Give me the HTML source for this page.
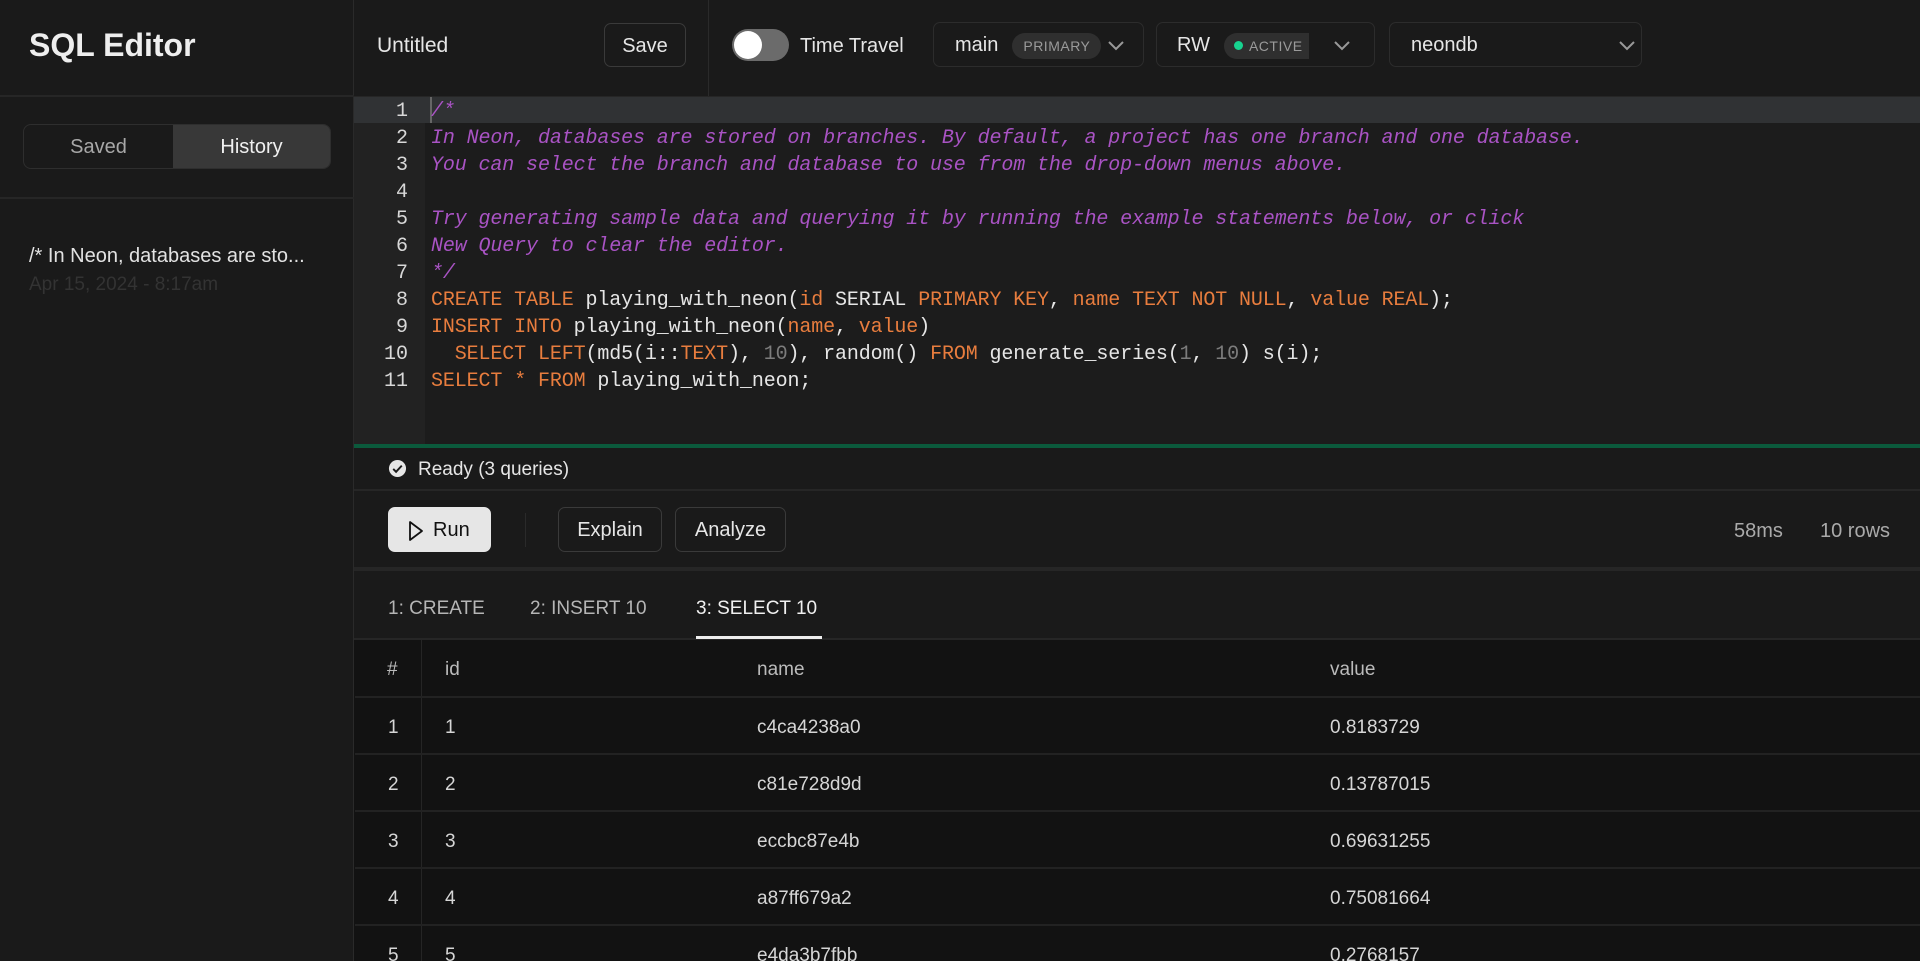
<!DOCTYPE html>
<html><head><meta charset="utf-8"><style>
*{box-sizing:border-box;margin:0;padding:0}
html,body{width:1920px;height:961px;overflow:hidden}
body{background:#1a1a1a;font-family:"Liberation Sans",sans-serif;color:#e6e6e6;position:relative}
.a{position:absolute}
.side{left:0;top:0;width:354px;height:961px;border-right:1px solid #2a2a2a;background:#1a1a1a}
.btn{position:absolute;border:1px solid #3a3a3a;border-radius:7px;display:flex;align-items:center;font-size:20px;color:#e6e6e6;padding-top:2px}
.code{font-family:"Liberation Mono",monospace;font-size:20px;letter-spacing:-0.12px;white-space:pre;line-height:27px}
.c{color:#a953c4;font-style:italic}.k{color:#e87d3e}.n{color:#7c7c7c}
.ln{position:absolute;left:354px;width:54px;text-align:right;font-family:"Liberation Mono",monospace;font-size:20px;color:#d8d8d8}
.row{position:absolute;left:355px;width:1565px;height:57px;border-bottom:2px solid #222;font-size:19px;color:#d6d6d6}
.row span{position:absolute;top:calc(50% + 2px);transform:translateY(-50%)}
</style></head><body>
<div class="a side">
  <div class="a" style="left:29px;top:27px;font-size:32px;font-weight:bold;color:#eee">SQL Editor</div>
  <div class="a" style="left:0;top:95px;width:354px;border-top:2px solid #262626"></div>
  <div class="a" style="left:23px;top:124px;width:308px;height:45px;border:1px solid #2e2e2e;border-radius:8px;overflow:hidden;display:flex;font-size:20px;padding-top:2px">
    <div style="width:149px;display:flex;align-items:center;justify-content:center;color:#a8a8a8">Saved</div>
    <div style="flex:1;display:flex;align-items:center;justify-content:center;background:#383838;color:#f0f0f0;margin-top:-2px;padding-top:2px">History</div>
  </div>
  <div class="a" style="left:0;top:197px;width:354px;border-top:2px solid #262626"></div>
  <div class="a" style="left:29px;top:245px;font-size:20px;color:#e2e2e2">/* In Neon, databases are sto...</div>
  <div class="a" style="left:29px;top:274px;font-size:19px;color:#333">Apr 15, 2024 - 8:17am</div>
</div>
<div class="a" style="left:354px;top:0;width:1566px;height:97px;border-bottom:1px solid #262626"></div>
<div class="a" style="left:708px;top:0;height:96px;border-left:1px solid #2a2a2a"></div>
<div class="a" style="left:377px;top:34px;font-size:21px;color:#e6e6e6">Untitled</div>
<div class="btn" style="left:604px;top:23px;width:82px;height:44px;justify-content:center">Save</div>
<div class="a" style="left:732px;top:29px;width:57px;height:32px;border-radius:16px;background:#6b6b6b"></div>
<div class="a" style="left:734px;top:31px;width:28px;height:28px;border-radius:14px;background:#fff"></div>
<div class="a" style="left:800px;top:35px;font-size:20px">Time Travel</div>
<div class="btn" style="left:933px;top:22px;width:211px;height:45px;border-color:#2c2c2c">
  <span style="margin-left:21px">main</span>
  <span style="margin-left:14px;background:#2f2f2f;border-radius:13px;font-size:14px;letter-spacing:.5px;color:#9a9a9a;padding:5px 11px">PRIMARY</span>
  <svg style="margin-left:6px" width="18" height="12" viewBox="0 0 18 12"><path d="M2 2l7 7 7-7" stroke="#999" stroke-width="2" fill="none"/></svg>
</div>
<div class="btn" style="left:1156px;top:22px;width:219px;height:45px;border-color:#2c2c2c">
  <span style="margin-left:20px">RW</span>
  <span style="margin-left:14px;background:#2f2f2f;border-radius:13px 0 0 13px;font-size:14px;letter-spacing:.5px;color:#9a9a9a;padding:5px 6px 5px 10px;display:flex;align-items:center"><i style="width:9px;height:9px;border-radius:5px;background:#17d38f;margin-right:6px;display:inline-block"></i>ACTIVE</span>
  <svg style="margin-left:24px" width="18" height="12" viewBox="0 0 18 12"><path d="M2 2l7 7 7-7" stroke="#999" stroke-width="2" fill="none"/></svg>
</div>
<div class="btn" style="left:1389px;top:22px;width:253px;height:45px;border-color:#2c2c2c">
  <span style="margin-left:21px">neondb</span>
  <svg style="margin-left:140px" width="18" height="12" viewBox="0 0 18 12"><path d="M2 2l7 7 7-7" stroke="#999" stroke-width="2" fill="none"/></svg>
</div>
<div class="a" style="left:354px;top:97px;width:1566px;height:349px;background:#1c1c1c"></div>
<div class="a" style="left:354px;top:97px;width:71px;height:349px;background:#222"></div>
<div class="a" style="left:354px;top:97px;width:1566px;height:26px;background:#303234"></div>
<div class="a" style="left:430px;top:97px;height:26px;border-left:2px solid #666"></div>
<div class="ln" style="top:98px;line-height:27px">1<br>2<br>3<br>4<br>5<br>6<br>7<br>8<br>9<br>10<br>11</div>
<div class="a code" style="left:431px;top:98px"><span class="c">/*
In Neon, databases are stored on branches. By default, a project has one branch and one database.
You can select the branch and database to use from the drop-down menus above.

Try generating sample data and querying it by running the example statements below, or click
New Query to clear the editor.
*/</span>
<span class="k">CREATE TABLE</span> playing_with_neon(<span class="k">id</span> SERIAL <span class="k">PRIMARY KEY</span>, <span class="k">name</span> <span class="k">TEXT NOT NULL</span>, <span class="k">value</span> <span class="k">REAL</span>);
<span class="k">INSERT INTO</span> playing_with_neon(<span class="k">name</span>, <span class="k">value</span>)
  <span class="k">SELECT LEFT</span>(md5(i::<span class="k">TEXT</span>), <span class="n">10</span>), random() <span class="k">FROM</span> generate_series(<span class="n">1</span>, <span class="n">10</span>) s(i);
<span class="k">SELECT</span> <span class="k">*</span> <span class="k">FROM</span> playing_with_neon;</div>
<div class="a" style="left:354px;top:444px;width:1566px;height:4px;background:#0b5a3c"></div>
<svg class="a" style="left:388px;top:459px" width="19" height="19" viewBox="0 0 20 20"><circle cx="10" cy="10" r="9" fill="#e6e6e6"/><path d="M5.5 10.5l3 3 6-6.5" stroke="#1a1a1a" stroke-width="2" fill="none"/></svg>
<div class="a" style="left:418px;top:459px;font-size:19px">Ready (3 queries)</div>
<div class="a" style="left:354px;top:489px;width:1566px;border-top:2px solid #262626"></div>
<div class="btn" style="left:388px;top:507px;width:103px;height:45px;background:#e6e6e6;color:#111;border-color:#e6e6e6">
  <svg style="margin-left:19px;margin-right:9px" width="16" height="22" viewBox="0 0 16 22"><path d="M2 2l12 9-12 9z" stroke="#111" stroke-width="1.8" fill="none" stroke-linejoin="round"/></svg>Run</div>
<div class="a" style="left:525px;top:513px;height:34px;border-left:1px solid #2a2a2a"></div>
<div class="btn" style="left:558px;top:507px;width:104px;height:45px;justify-content:center">Explain</div>
<div class="btn" style="left:675px;top:507px;width:111px;height:45px;justify-content:center">Analyze</div>
<div class="a" style="left:1734px;top:520px;font-size:20px;color:#aaa">58ms</div>
<div class="a" style="left:1820px;top:520px;font-size:20px;color:#aaa">10 rows</div>
<div class="a" style="left:354px;top:567px;width:1566px;border-top:4px solid #262626"></div>
<div class="a" style="left:388px;top:598px;font-size:19px;color:#b5b5b5">1: CREATE</div>
<div class="a" style="left:530px;top:598px;font-size:19px;color:#b5b5b5">2: INSERT 10</div>
<div class="a" style="left:696px;top:598px;font-size:19px;color:#f0f0f0">3: SELECT 10</div>
<div class="a" style="left:354px;top:638px;width:1566px;border-top:2px solid #262626"></div>
<div class="a" style="left:696px;top:636px;width:126px;height:3px;background:#eee"></div>
<div class="a" style="left:354px;top:640px;width:1566px;height:321px;background:#121212"></div>
<div class="a" style="left:421px;top:640px;height:321px;border-left:1px solid #252525"></div>
<div class="row" style="top:640px;height:58px;color:#bbb"><span style="left:32px">#</span><span style="left:90px">id</span><span style="left:402px">name</span><span style="left:975px">value</span></div>
<div class="row" style="top:698px"><span style="left:33px">1</span><span style="left:90px">1</span><span style="left:402px">c4ca4238a0</span><span style="left:975px">0.8183729</span></div>
<div class="row" style="top:755px"><span style="left:33px">2</span><span style="left:90px">2</span><span style="left:402px">c81e728d9d</span><span style="left:975px">0.13787015</span></div>
<div class="row" style="top:812px"><span style="left:33px">3</span><span style="left:90px">3</span><span style="left:402px">eccbc87e4b</span><span style="left:975px">0.69631255</span></div>
<div class="row" style="top:869px"><span style="left:33px">4</span><span style="left:90px">4</span><span style="left:402px">a87ff679a2</span><span style="left:975px">0.75081664</span></div>
<div class="row" style="top:926px"><span style="left:33px">5</span><span style="left:90px">5</span><span style="left:402px">e4da3b7fbb</span><span style="left:975px">0.2768157</span></div>
</body></html>
